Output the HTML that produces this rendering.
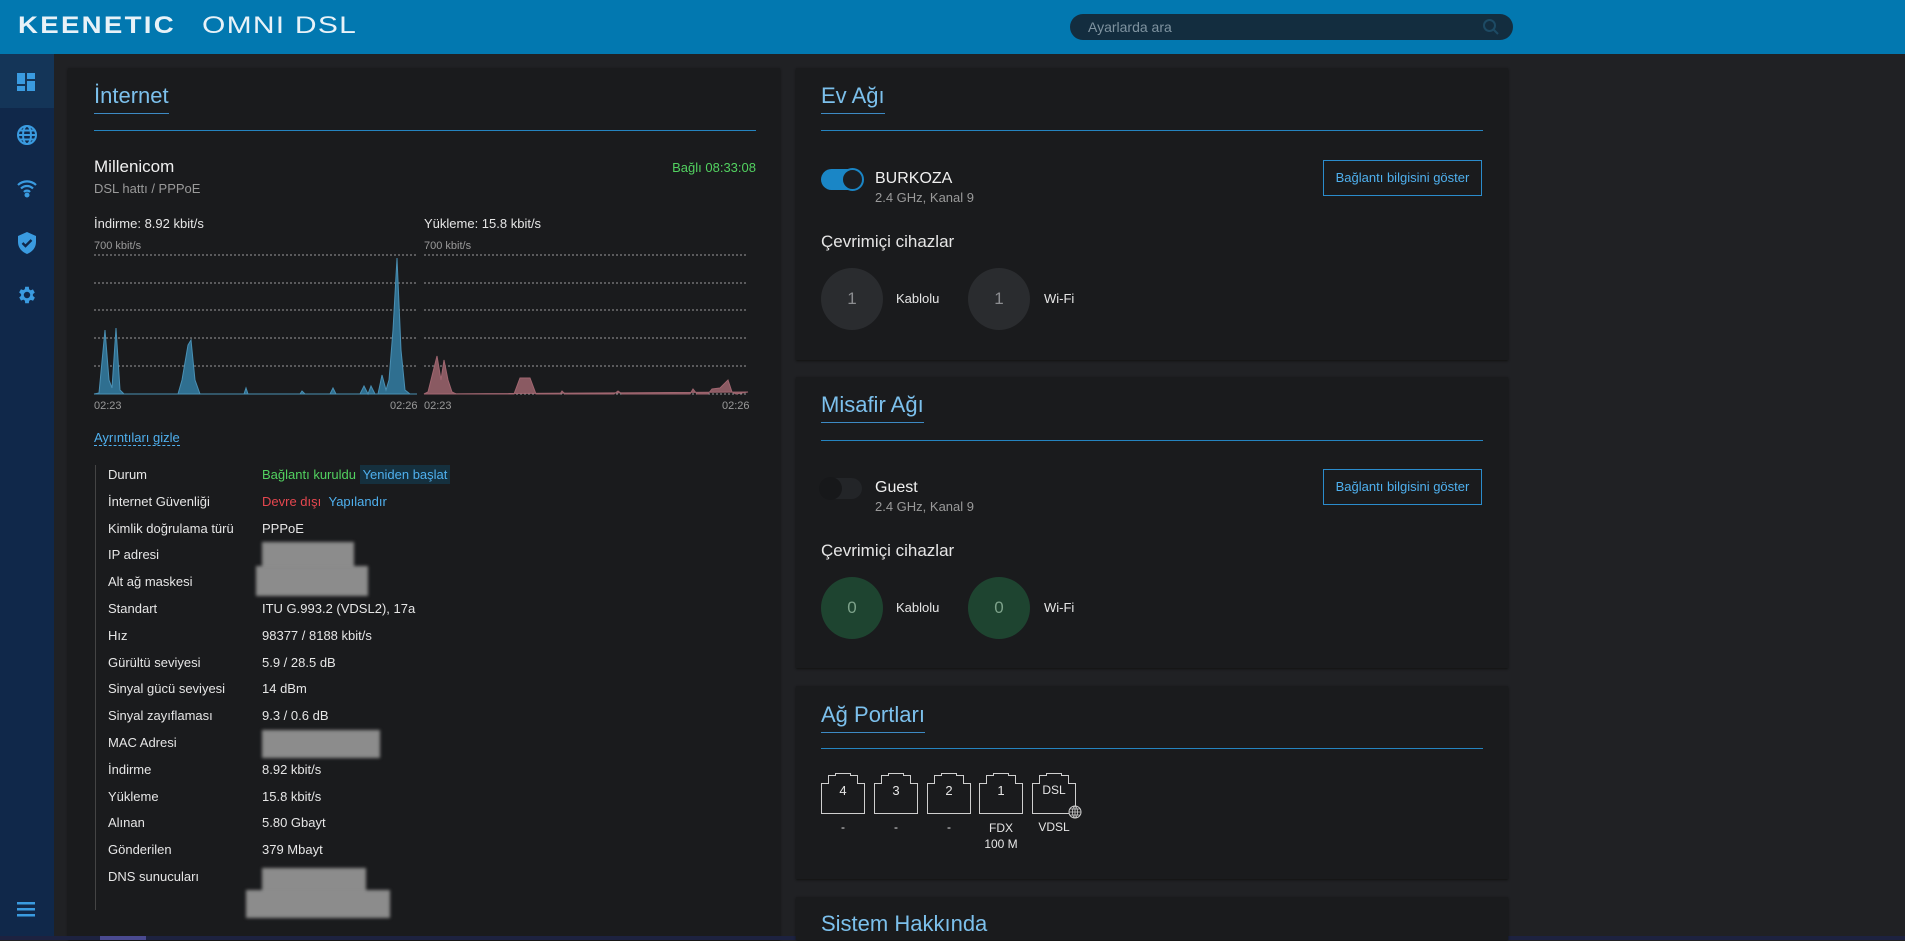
<!DOCTYPE html>
<html><head><meta charset="utf-8">
<style>
*{margin:0;padding:0;box-sizing:border-box}
body{width:1905px;height:940px;overflow:hidden;background:#202124;font-family:"Liberation Sans Narrow","Liberation Sans",sans-serif;color:#e6e6e6;position:relative}
.hdr{position:absolute;left:0;top:0;width:1905px;height:54px;background:#0278b0}
.logo{position:absolute;left:18px;top:12px;font-family:"Liberation Sans",sans-serif;font-size:24px;color:#e8f2f8;white-space:nowrap}
.logo b{font-weight:900;letter-spacing:2px;transform:scaleX(1.15);display:inline-block;transform-origin:left}
.logo span{position:absolute;left:184px;top:0;font-weight:400;transform:scaleX(1.25);transform-origin:left;display:inline-block;letter-spacing:1px}
.search{position:absolute;left:1070px;top:14px;width:443px;height:26px;border-radius:13px;background:#132d3f;color:#7f93a0;font-size:14px;padding:5px 18px}
.side{position:absolute;left:0;top:54px;width:54px;height:886px;background:#10284a}
.side .act{position:absolute;left:0;top:0;width:54px;height:54px;background:#143558}
.side svg{position:absolute;left:16px}
.card{position:absolute;background:#1a1b1d;box-shadow:0 1px 2px #111}
.ttl{position:absolute;font-size:22px;color:#7cc0ec;border-bottom:1px solid #3d8ac4;padding-bottom:3px;line-height:28px}
.ln{position:absolute;height:1px;background:#2584c0}
.t{position:absolute;white-space:nowrap}
.lbl{font-size:13px;color:#e6e6e6}
.btn{position:absolute;border:1px solid #2b8ccc;color:#4fb0ee;font-size:13px;text-align:center}
.circ{position:absolute;width:62px;height:62px;border-radius:50%;background:#2a2c2f;color:#8b8d90;font-size:17px;text-align:center;line-height:62px}
.circ.g{background:#1e4430;color:#7da28a}
.blur{position:absolute;background:#8c8c8c;filter:blur(1.5px)}
</style></head><body>
<div class="hdr">
 <div class="logo"><b>KEENETIC</b><span>OMNI DSL</span></div>
 <div class="search">Ayarlarda ara</div>
 <svg style="position:absolute;left:1482px;top:18px" width="18" height="18" viewBox="0 0 18 18"><circle cx="7.5" cy="7.5" r="5.5" stroke="#1d4a64" stroke-width="2" fill="none"/><path d="M11.5 11.5 16 16" stroke="#1d4a64" stroke-width="2"/></svg>
</div>
<div class="side">
 <div class="act"></div>
 <svg style="top:18px" width="20" height="20" viewBox="0 0 20 20" fill="#3a9be0"><rect x="1" y="1" width="8" height="11"/><rect x="11" y="1" width="8" height="6"/><rect x="11" y="9" width="8" height="10"/><rect x="1" y="14" width="8" height="5"/></svg>
 <svg style="top:70px" width="22" height="22" viewBox="0 0 22 22" fill="none" stroke="#3a9be0" stroke-width="2"><circle cx="11" cy="11" r="9"/><ellipse cx="11" cy="11" rx="4" ry="9"/><path d="M2 11h18M3.5 6.5h15M3.5 15.5h15"/></svg>
 <svg style="top:124px" width="22" height="20" viewBox="0 0 22 20" fill="none" stroke="#3a9be0" stroke-width="2.2"><path d="M2 7a13 13 0 0 1 18 0M5 10.5a8.5 8.5 0 0 1 12 0M8 14a4 4 0 0 1 6 0"/><circle cx="11" cy="17" r="1.4" fill="#3a9be0"/></svg>
 <svg style="top:177px" width="22" height="24" viewBox="0 0 22 24"><path d="M11 1 2 5v6c0 6 4 10 9 12 5-2 9-6 9-12V5z" fill="#3a9be0"/><path d="M6.5 12l3 3 6-6" stroke="#10284a" stroke-width="2.4" fill="none"/></svg>
 <svg style="top:230px" width="22" height="22" viewBox="0 0 24 24" fill="#3a9be0"><path d="M19.4 13a7.5 7.5 0 0 0 0-2l2.1-1.6-2-3.5-2.5 1a7 7 0 0 0-1.7-1L15 3h-4l-.4 2.7a7 7 0 0 0-1.7 1l-2.5-1-2 3.5L6.6 11a7.5 7.5 0 0 0 0 2l-2.1 1.6 2 3.5 2.5-1a7 7 0 0 0 1.7 1L11 21h4l.4-2.7a7 7 0 0 0 1.7-1l2.5 1 2-3.5zM13 15.5A3.5 3.5 0 1 1 13 8.5a3.5 3.5 0 0 1 0 7z" transform="translate(-1 0)"/></svg>
 <svg style="top:847px;left:17px" width="20" height="16" viewBox="0 0 20 16" fill="#3a9be0"><rect y="1" width="18" height="2.5"/><rect y="7" width="18" height="2.5"/><rect y="13" width="18" height="2.5"/></svg>
</div>

<!-- Internet card -->
<div class="card" style="left:68px;top:68px;width:712px;height:872px"></div>
<div class="ttl" style="left:94px;top:82px">İnternet</div>
<div class="ln" style="left:94px;top:130px;width:662px"></div>
<div class="t" style="left:94px;top:157px;font-size:17px;color:#f0f0f0">Millenicom</div>
<div class="t" style="left:94px;top:181px;font-size:13px;color:#9a9a9a">DSL hattı / PPPoE</div>
<div class="t" style="left:656px;top:160px;width:100px;text-align:right;font-size:13px;color:#52d160">Bağlı 08:33:08</div>
<div class="t lbl" style="left:94px;top:216px">İndirme: 8.92 kbit/s</div>
<div class="t lbl" style="left:424px;top:216px">Yükleme: 15.8 kbit/s</div>
<div class="t" style="left:94px;top:240px;font-size:11px;color:#9a9a9a">700 kbit/s</div>
<div class="t" style="left:424px;top:240px;font-size:11px;color:#9a9a9a">700 kbit/s</div>
<svg style="position:absolute;left:0;top:0" width="780" height="420">
 <g stroke="#9a9a9a" stroke-dasharray="2,2" stroke-width="1">
  <path d="M94 255H417M94 283H417M94 310H417M94 338H417M94 366H417M94 394H417"/>
  <path d="M424 255H748M424 283H748M424 310H748M424 338H748M424 366H748M424 394H748"/>
 </g>
 <path d="M94 394 L99 393 L105 330 L109 380 L112 388 L116 328 L120 390 L124 394 L178 394 L182 380 L188 345 L191 340 L195 380 L200 394 L244 394 L246 388 L248 394 L300 394 L302 391 L305 394 L330 394 L333 388 L336 394 L360 394 L364 386 L368 394 L371 386 L375 394 L378 394 L382 375 L386 390 L389 380 L393 330 L397 258 L401 350 L405 390 L410 394 L417 394Z" fill="#2f6f90" stroke="#4a90b4" stroke-width="1"/>
 <path d="M424 394 L428 392 L433 372 L437 356 L441 380 L444 360 L448 380 L452 392 L456 394 L514 394 L520 378 L530 378 L536 394 L560 394 L562 391 L565 394 L614 394 L618 391 L622 394 L690 394 L693 389 L697 394 L708 394 L712 389 L720 388 L728 380 L732 392 L736 394 L748 392 Z" fill="#8a5a62" stroke="#a06670" stroke-width="1"/>
</svg>
<div class="t" style="left:94px;top:400px;font-size:11px;color:#9a9a9a">02:23</div>
<div class="t" style="left:390px;top:400px;font-size:11px;color:#9a9a9a">02:26</div>
<div class="t" style="left:424px;top:400px;font-size:11px;color:#9a9a9a">02:23</div>
<div class="t" style="left:722px;top:400px;font-size:11px;color:#9a9a9a">02:26</div>
<div class="t" style="left:94px;top:430px;font-size:13px;color:#4fb0ee;border-bottom:1px dashed #4fb0ee">Ayrıntıları gizle</div>
<div style="position:absolute;left:95px;top:465px;width:1px;height:445px;background:#444"></div>
<div class="t lbl" style="left:108px;top:462px;line-height:26.8px">Durum<br>İnternet Güvenliği<br>Kimlik doğrulama türü<br>IP adresi<br>Alt ağ maskesi<br>Standart<br>Hız<br>Gürültü seviyesi<br>Sinyal gücü seviyesi<br>Sinyal zayıflaması<br>MAC Adresi<br>İndirme<br>Yükleme<br>Alınan<br>Gönderilen<br>DNS sunucuları</div>
<div class="t lbl" style="left:262px;top:462px;line-height:26.8px"><span style="color:#52d160">Bağlantı kuruldu</span> <span style="color:#4fb0ee;background:#15303e;padding:2px 3px">Yeniden başlat</span><br><span style="color:#e5474f">Devre dışı</span> &nbsp;<span style="color:#4fb0ee">Yapılandır</span><br>PPPoE<br>&nbsp;<br>&nbsp;<br>ITU G.993.2 (VDSL2), 17a<br>98377 / 8188 kbit/s<br>5.9 / 28.5 dB<br>14 dBm<br>9.3 / 0.6 dB<br>&nbsp;<br>8.92 kbit/s<br>15.8 kbit/s<br>5.80 Gbayt<br>379 Mbayt</div>
<div class="blur" style="left:262px;top:542px;width:92px;height:28px"></div>
<div class="blur" style="left:256px;top:566px;width:112px;height:30px"></div>
<div class="blur" style="left:262px;top:730px;width:118px;height:28px"></div>
<div class="blur" style="left:262px;top:868px;width:104px;height:30px"></div>
<div class="blur" style="left:246px;top:890px;width:144px;height:28px"></div>
<div style="position:absolute;left:0;top:936px;width:1905px;height:4px;background:#1d2240"></div>
<div style="position:absolute;left:100px;top:936px;width:46px;height:4px;background:#4a4a90"></div>

<!-- Ev Ağı -->
<div class="card" style="left:796px;top:68px;width:712px;height:292px"></div>
<div class="ttl" style="left:821px;top:82px">Ev Ağı</div>
<div class="ln" style="left:821px;top:130px;width:662px"></div>
<div style="position:absolute;left:821px;top:169px;width:41px;height:21px;border-radius:11px;background:#1a86c6"></div>
<div style="position:absolute;left:841px;top:168px;width:23px;height:23px;border-radius:50%;background:#1c1e22;border:2px solid #1a86c6"></div>
<div class="t" style="left:875px;top:170px;font-size:16px;color:#f0f0f0">BURKOZA</div>
<div class="t" style="left:875px;top:190px;font-size:13px;color:#9a9a9a">2.4 GHz, Kanal 9</div>
<div class="btn" style="left:1323px;top:160px;width:159px;height:36px;line-height:34px">Bağlantı bilgisini göster</div>
<div class="t" style="left:821px;top:232px;font-size:17px;color:#e6e6e6">Çevrimiçi cihazlar</div>
<div class="circ" style="left:821px;top:268px">1</div>
<div class="t lbl" style="left:896px;top:291px">Kablolu</div>
<div class="circ" style="left:968px;top:268px">1</div>
<div class="t lbl" style="left:1044px;top:291px">Wi-Fi</div>

<!-- Misafir -->
<div class="card" style="left:796px;top:377px;width:712px;height:291px"></div>
<div class="ttl" style="left:821px;top:391px">Misafir Ağı</div>
<div class="ln" style="left:821px;top:440px;width:662px"></div>
<div style="position:absolute;left:821px;top:478px;width:41px;height:21px;border-radius:11px;background:#232528"></div>
<div style="position:absolute;left:819px;top:477px;width:23px;height:23px;border-radius:50%;background:#17181a"></div>
<div class="t" style="left:875px;top:479px;font-size:16px;color:#f0f0f0">Guest</div>
<div class="t" style="left:875px;top:499px;font-size:13px;color:#9a9a9a">2.4 GHz, Kanal 9</div>
<div class="btn" style="left:1323px;top:469px;width:159px;height:36px;line-height:34px">Bağlantı bilgisini göster</div>
<div class="t" style="left:821px;top:541px;font-size:17px;color:#e6e6e6">Çevrimiçi cihazlar</div>
<div class="circ g" style="left:821px;top:577px">0</div>
<div class="t lbl" style="left:896px;top:600px">Kablolu</div>
<div class="circ g" style="left:968px;top:577px">0</div>
<div class="t lbl" style="left:1044px;top:600px">Wi-Fi</div>

<!-- Ağ Portları -->
<div class="card" style="left:796px;top:686px;width:712px;height:193px"></div>
<div class="ttl" style="left:821px;top:701px">Ağ Portları</div>
<div class="ln" style="left:821px;top:748px;width:662px"></div>
<svg style="position:absolute;left:800px;top:760px" width="300" height="70">
 <g fill="none" stroke="#cfcfcf" stroke-width="1">
  <path d="M21.5 53.5V23.5H28.5V15.5H35.5V13.5H50.5V15.5H57.5V23.5H64.5V53.5Z"/>
  <path d="M74.5 53.5V23.5H81.5V15.5H88.5V13.5H103.5V15.5H110.5V23.5H117.5V53.5Z"/>
  <path d="M127.5 53.5V23.5H134.5V15.5H141.5V13.5H156.5V15.5H163.5V23.5H170.5V53.5Z"/>
  <path d="M179.5 53.5V23.5H186.5V15.5H193.5V13.5H208.5V15.5H215.5V23.5H222.5V53.5Z"/>
  <path d="M232.5 53.5V23.5H239.5V15.5H246.5V13.5H261.5V15.5H268.5V23.5H275.5V53.5Z"/>
 </g>
 <circle cx="275" cy="52" r="6" fill="#1a1b1d" stroke="#cfcfcf"/>
 <path d="M269 52h12M275 46v12M270.5 49h9M270.5 55h9" stroke="#cfcfcf" stroke-width="0.8"/>
 <ellipse cx="275" cy="52" rx="2.5" ry="6" fill="none" stroke="#cfcfcf" stroke-width="0.8"/>
</svg>
<div class="t" style="left:821px;top:783px;width:44px;text-align:center;font-size:13px">4</div>
<div class="t" style="left:874px;top:783px;width:44px;text-align:center;font-size:13px">3</div>
<div class="t" style="left:927px;top:783px;width:44px;text-align:center;font-size:13px">2</div>
<div class="t" style="left:979px;top:783px;width:44px;text-align:center;font-size:13px">1</div>
<div class="t" style="left:1032px;top:783px;width:44px;text-align:center;font-size:12px">DSL</div>
<div class="t" style="left:821px;top:820px;width:44px;text-align:center;font-size:12px">-</div>
<div class="t" style="left:874px;top:820px;width:44px;text-align:center;font-size:12px">-</div>
<div class="t" style="left:927px;top:820px;width:44px;text-align:center;font-size:12px">-</div>
<div class="t" style="left:976px;top:820px;width:50px;text-align:center;font-size:12px;line-height:16px">FDX<br>100 M</div>
<div class="t" style="left:1029px;top:820px;width:50px;text-align:center;font-size:12px">VDSL</div>

<!-- Sistem -->
<div class="card" style="left:796px;top:897px;width:712px;height:43px"></div>
<div class="ttl" style="left:821px;top:910px;border:none">Sistem Hakkında</div>
</body></html>
